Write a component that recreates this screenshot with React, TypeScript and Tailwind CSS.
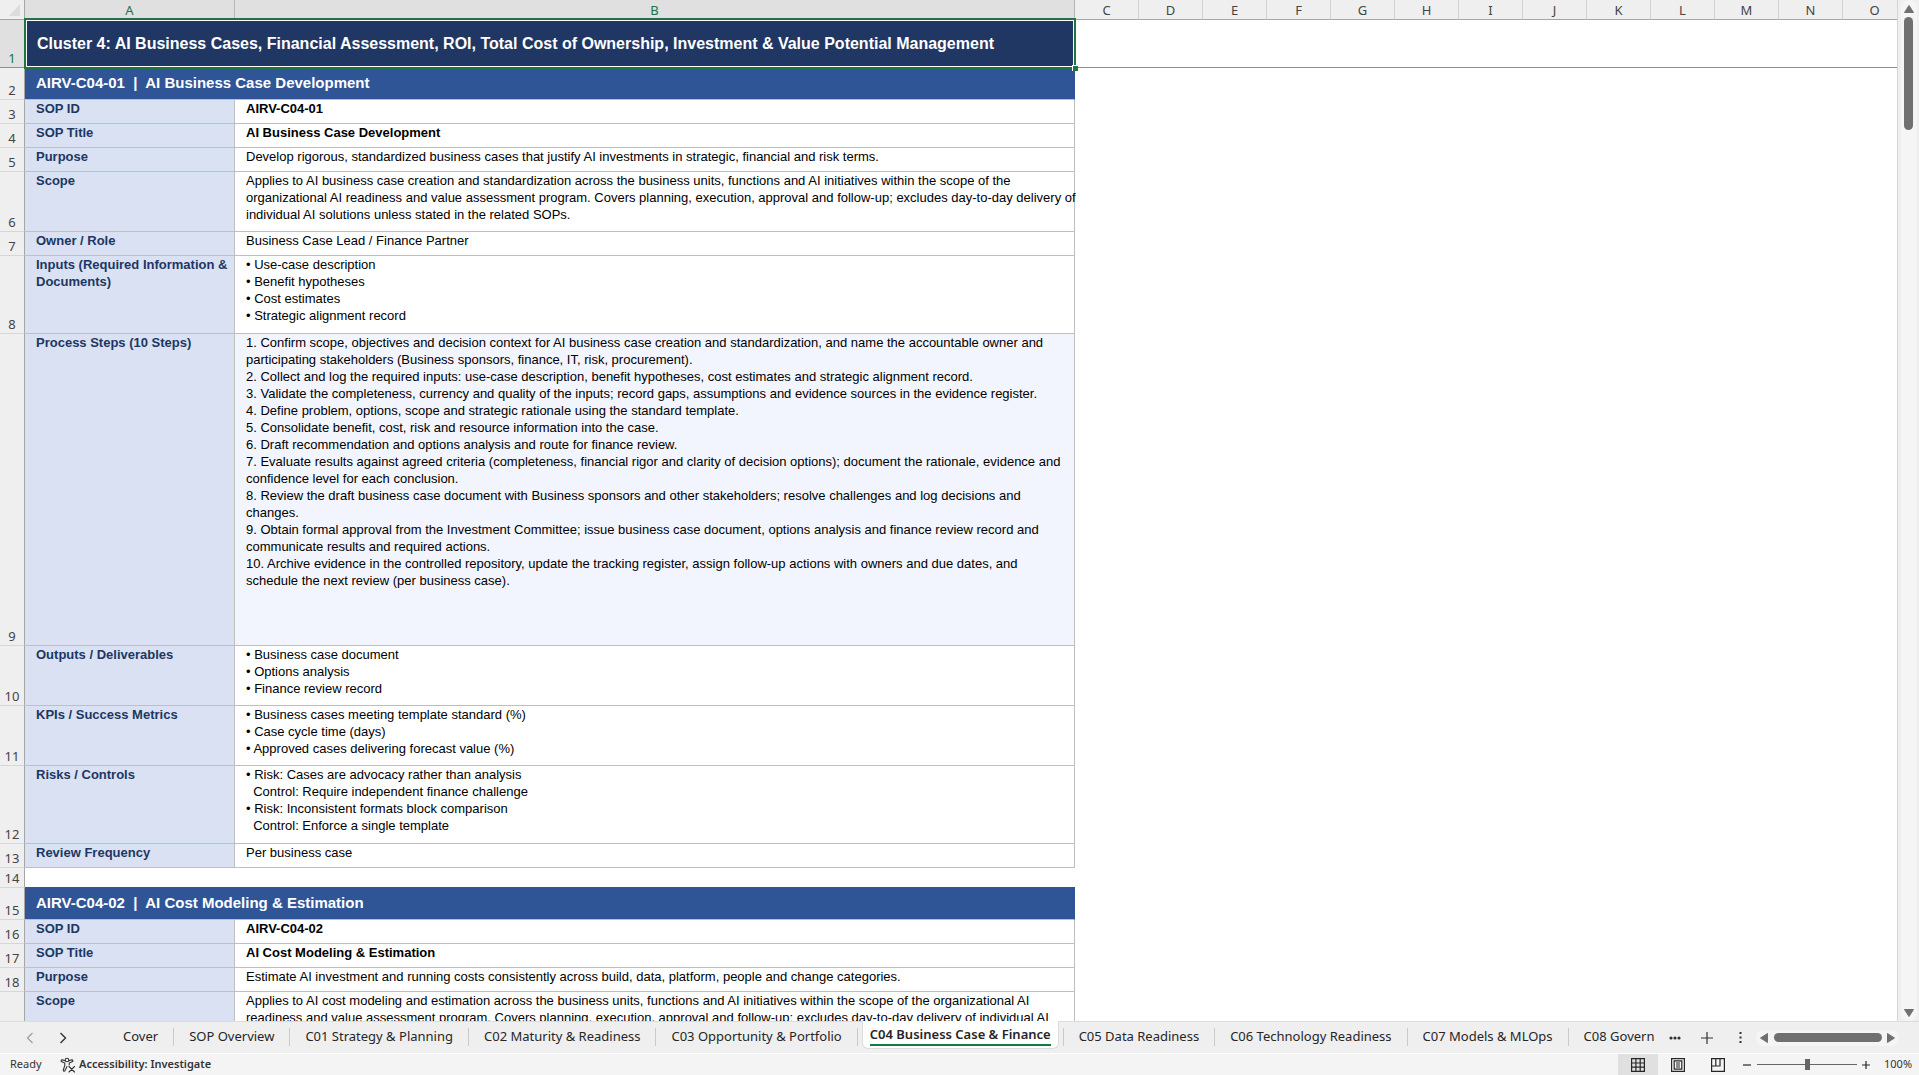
import { useState } from "react";

type Row = {
  n?: number;
  kind: "title" | "section" | "field" | "blank";
  height: string;
  label?: string;
  lines?: string[];
  bold?: boolean;
  tinted?: boolean;
};

const rows: Row[] = [
  {
    n: 1,
    kind: "title",
    height: "h-12",
    label:
      "Cluster 4: AI Business Cases, Financial Assessment, ROI, Total Cost of Ownership, Investment & Value Potential Management",
  },
  { n: 2, kind: "section", height: "h-8", label: "AIRV-C04-01  |  AI Business Case Development" },
  { n: 3, kind: "field", height: "h-6", label: "SOP ID", lines: ["AIRV-C04-01"], bold: true },
  { n: 4, kind: "field", height: "h-6", label: "SOP Title", lines: ["AI Business Case Development"], bold: true },
  {
    n: 5,
    kind: "field",
    height: "h-6",
    label: "Purpose",
    lines: ["Develop rigorous, standardized business cases that justify AI investments in strategic, financial and risk terms."],
  },
  {
    n: 6,
    kind: "field",
    height: "h-[60px]",
    label: "Scope",
    lines: [
      "Applies to AI business case creation and standardization across the business units, functions and AI initiatives within the scope of the",
      "organizational AI readiness and value assessment program. Covers planning, execution, approval and follow-up; excludes day-to-day delivery of",
      "individual AI solutions unless stated in the related SOPs.",
    ],
  },
  { n: 7, kind: "field", height: "h-6", label: "Owner / Role", lines: ["Business Case Lead / Finance Partner"] },
  {
    n: 8,
    kind: "field",
    height: "h-[78px]",
    label: "Inputs (Required Information &\nDocuments)",
    lines: ["• Use-case description", "• Benefit hypotheses", "• Cost estimates", "• Strategic alignment record"],
  },
  {
    n: 9,
    kind: "field",
    height: "h-[312px]",
    label: "Process Steps (10 Steps)",
    tinted: true,
    lines: [
      "1. Confirm scope, objectives and decision context for AI business case creation and standardization, and name the accountable owner and",
      "participating stakeholders (Business sponsors, finance, IT, risk, procurement).",
      "2. Collect and log the required inputs: use-case description, benefit hypotheses, cost estimates and strategic alignment record.",
      "3. Validate the completeness, currency and quality of the inputs; record gaps, assumptions and evidence sources in the evidence register.",
      "4. Define problem, options, scope and strategic rationale using the standard template.",
      "5. Consolidate benefit, cost, risk and resource information into the case.",
      "6. Draft recommendation and options analysis and route for finance review.",
      "7. Evaluate results against agreed criteria (completeness, financial rigor and clarity of decision options); document the rationale, evidence and",
      "confidence level for each conclusion.",
      "8. Review the draft business case document with Business sponsors and other stakeholders; resolve challenges and log decisions and",
      "changes.",
      "9. Obtain formal approval from the Investment Committee; issue business case document, options analysis and finance review record and",
      "communicate results and required actions.",
      "10. Archive evidence in the controlled repository, update the tracking register, assign follow-up actions with owners and due dates, and",
      "schedule the next review (per business case).",
    ],
  },
  {
    n: 10,
    kind: "field",
    height: "h-[60px]",
    label: "Outputs / Deliverables",
    lines: ["• Business case document", "• Options analysis", "• Finance review record"],
  },
  {
    n: 11,
    kind: "field",
    height: "h-[60px]",
    label: "KPIs / Success Metrics",
    lines: ["• Business cases meeting template standard (%)", "• Case cycle time (days)", "• Approved cases delivering forecast value (%)"],
  },
  {
    n: 12,
    kind: "field",
    height: "h-[78px]",
    label: "Risks / Controls",
    lines: [
      "• Risk: Cases are advocacy rather than analysis",
      "  Control: Require independent finance challenge",
      "• Risk: Inconsistent formats block comparison",
      "  Control: Enforce a single template",
    ],
  },
  { n: 13, kind: "field", height: "h-6", label: "Review Frequency", lines: ["Per business case"] },
  { n: 14, kind: "blank", height: "h-5" },
  { n: 15, kind: "section", height: "h-8", label: "AIRV-C04-02  |  AI Cost Modeling & Estimation" },
  { n: 16, kind: "field", height: "h-6", label: "SOP ID", lines: ["AIRV-C04-02"], bold: true },
  { n: 17, kind: "field", height: "h-6", label: "SOP Title", lines: ["AI Cost Modeling & Estimation"], bold: true },
  {
    n: 18,
    kind: "field",
    height: "h-6",
    label: "Purpose",
    lines: ["Estimate AI investment and running costs consistently across build, data, platform, people and change categories."],
  },
  {
    kind: "field",
    height: "h-[60px]",
    label: "Scope",
    lines: [
      "Applies to AI cost modeling and estimation across the business units, functions and AI initiatives within the scope of the organizational AI",
      "readiness and value assessment program. Covers planning, execution, approval and follow-up; excludes day-to-day delivery of individual AI",
    ],
  },
];

const emptyColumns = ["C", "D", "E", "F", "G", "H", "I", "J", "K", "L", "M", "N", "O"];

const tabs = [
  "Cover",
  "SOP Overview",
  "C01 Strategy & Planning",
  "C02 Maturity & Readiness",
  "C03 Opportunity & Portfolio",
  "C04 Business Case & Finance",
  "C05 Data Readiness",
  "C06 Technology Readiness",
  "C07 Models & MLOps",
  "C08 Govern",
];

function RowCells({ row }: { row: Row }) {
  if (row.kind === "title") {
    return (
      <>
        <td
          colSpan={2}
          className="relative border-b border-[#8f8f8f] bg-[#203764] pl-3 text-base font-bold whitespace-pre text-white"
        >
          {row.label}
          <div className="pointer-events-none absolute -inset-x-px -top-0.5 -bottom-0.5 z-10 border-2 border-[#217346]">
            <div className="h-full border border-white" />
            <div className="absolute -right-1 -bottom-1 size-1.5 border-t border-l border-white bg-[#217346]" />
          </div>
        </td>
        <td colSpan={13} className="border-b border-[#8f8f8f]" />
      </>
    );
  }
  if (row.kind === "section") {
    return (
      <td
        colSpan={2}
        className="border-r border-b border-r-[#2f5597] border-b-[#bfbfbf] bg-[#2f5597] pl-[11px] text-[15px] font-bold whitespace-pre text-white"
      >
        {row.label}
      </td>
    );
  }
  if (row.kind === "blank") {
    return <td colSpan={2} className="border-b border-[#2f5597]" />;
  }
  return (
    <>
      <td className="border-r border-b border-[#bfbfbf] bg-[#d9e1f2] pl-[11px] align-top text-[13px] leading-[17px] font-bold whitespace-pre text-[#203764]">
        {row.label}
      </td>
      <td
        className={`border-r border-b border-[#bfbfbf] pl-[11px] align-top text-[13px] leading-[17px] whitespace-pre text-black ${
          row.bold ? "font-bold" : ""
        } ${row.tinted ? "bg-[#f2f5fd]" : "bg-white"}`}
      >
        {row.lines?.join("\n")}
      </td>
    </>
  );
}

function Sheet() {
  return (
    <div className="min-h-0 min-w-0 flex-1 overflow-hidden border-r border-[#d4d4d4] bg-white">
      <table className="w-[1907px] table-fixed border-separate border-spacing-0 font-['Liberation_Sans',Arial,sans-serif]">
        <colgroup>
          <col className="w-[25px]" />
          <col className="w-[210px]" />
          <col className="w-[840px]" />
          {emptyColumns.map((c) => (
            <col key={c} className="w-16" />
          ))}
        </colgroup>
        <thead className="font-['Noto_Sans','Segoe_UI',sans-serif] text-[13px] text-[#444]">
          <tr className="h-5">
            <th aria-label="Select all" className="border-r border-b border-[#a6a6a6] bg-[#efefef] p-0">
              <svg viewBox="0 0 24 19" className="block h-[19px] w-6" aria-hidden="true">
                <path d="M20 4v12H9z" fill="#dcdcdc" />
              </svg>
            </th>
            {["A", "B"].map((c) => (
              <th
                key={c}
                className="border-r border-b border-r-[#b5b5b5] border-b-[#217346] bg-[#e0e0e0] px-0 pt-0.5 pb-0 leading-[17px] font-normal text-[#217346]"
              >
                {c}
              </th>
            ))}
            {emptyColumns.map((c) => (
              <th
                key={c}
                className="border-r border-b border-r-[#d0d0d0] border-b-[#a6a6a6] bg-[#efefef] px-0 pt-0.5 pb-0 leading-[17px] font-normal"
              >
                {c}
              </th>
            ))}
          </tr>
        </thead>
        <tbody>
          {rows.map((row, i) => (
            <tr key={i} className={row.height}>
              <th
                className={`border-r border-b border-r-[#a6a6a6] p-0 align-bottom font-['Noto_Sans','Segoe_UI',sans-serif] text-[13px] leading-[17px] font-normal ${
                  row.n === 1 ? "border-b-[#8f8f8f] bg-[#e0e0e0] text-[#217346]" : "border-b-[#d6d6d6] bg-[#efefef] text-[#444]"
                }`}
              >
                {row.n}
              </th>
              <RowCells row={row} />
            </tr>
          ))}
        </tbody>
      </table>
    </div>
  );
}

function VerticalScroll() {
  return (
    <div className="flex w-[21px] shrink-0 flex-col items-center bg-[#efefef]">
      <div className="flex w-4 flex-1 flex-col items-center rounded-full bg-[#f5f5f5]">
        <button aria-label="Scroll up" className="flex h-[17px] items-end pb-1">
          <svg viewBox="0 0 10 8" className="h-2 w-2.5" aria-hidden="true">
            <path d="M5 .5 9.5 7.5H.5z" fill="#707070" stroke="#707070" strokeLinejoin="round" />
          </svg>
        </button>
        <div className="h-[113px] w-[9px] rounded-full bg-[#707070]" />
        <button aria-label="Scroll down" className="mt-auto flex h-3 items-start">
          <svg viewBox="0 0 10 8" className="h-2 w-2.5" aria-hidden="true">
            <path d="M5 7.5 9.5 .5H.5z" fill="#707070" stroke="#707070" strokeLinejoin="round" />
          </svg>
        </button>
      </div>
    </div>
  );
}

function TabBar({ active, onSelect }: { active: string; onSelect: (tab: string) => void }) {
  return (
    <div className="flex h-8 shrink-0 items-start border-t border-[#dcdcdc] bg-[#efefef] text-[13px] text-[#262626]">
      <div className="flex h-full w-[108px] shrink-0 items-center pl-[26px]">
        <button aria-label="Previous sheet" className="w-[33px]">
          <svg viewBox="0 0 8 12" className="h-3 w-2" fill="none" stroke="#a0a0a0" strokeWidth="1.3" aria-hidden="true">
            <path d="M6.5 1 1.5 6l5 5" />
          </svg>
        </button>
        <button aria-label="Next sheet" className="w-8">
          <svg viewBox="0 0 8 12" className="h-3 w-2" fill="none" stroke="#333" strokeWidth="1.4" aria-hidden="true">
            <path d="m1.5 1 5 5-5 5" />
          </svg>
        </button>
      </div>
      <div className="flex h-full shrink-0">
        {tabs.map((tab, i) =>
          tab === active ? (
            <div key={tab} className="-mt-px flex h-full items-start px-1">
              <button className="h-7 rounded-b-md border border-t-0 border-[#dcdcdc] bg-white px-[7px] font-semibold whitespace-nowrap">
                <span className="block border-b-2 border-[#107c41] leading-[20px]">{tab}</span>
              </button>
            </div>
          ) : (
            <button key={tab} onClick={() => onSelect(tab)} className="flex h-[30px] items-center whitespace-nowrap">
              {tabs[i - 1] === active && <span className="h-[18px] w-px bg-[#cacaca]" />}
              <span className="px-[15px]">{tab}</span>
              {i < tabs.length - 1 && <span className="h-[18px] w-px bg-[#cacaca]" />}
            </button>
          ),
        )}
      </div>
      <div className="ml-auto flex h-full shrink-0 items-center">
        <button aria-label="More sheets" className="mr-5">
          <svg viewBox="0 0 12 4" className="h-1 w-3" fill="#333" aria-hidden="true">
            <circle cx="2" cy="2" r="1.6" />
            <circle cx="6" cy="2" r="1.6" />
            <circle cx="10" cy="2" r="1.6" />
          </svg>
        </button>
        <button aria-label="New sheet" className="mr-[26px]">
          <svg viewBox="0 0 12 12" className="size-3" stroke="#333" strokeWidth="1.2" aria-hidden="true">
            <path d="M6 0v12M0 6h12" />
          </svg>
        </button>
        <svg viewBox="0 0 3 11" className="mr-3.5 h-[11px] w-[3px]" fill="#333" aria-hidden="true">
          <path d="M.5 0h2v2h-2zM.5 4.5h2v2h-2zM.5 9h2v2h-2z" />
        </svg>
        <div className="mr-[22px] flex h-4 w-[143px] items-center justify-between rounded-full bg-[#f5f5f5] px-1">
          <button aria-label="Scroll left">
            <svg viewBox="0 0 8 10" className="h-2.5 w-2" aria-hidden="true">
              <path d="M.5 5 7.5 .5v9z" fill="#707070" stroke="#707070" strokeLinejoin="round" />
            </svg>
          </button>
          <div className="h-[9px] w-[108px] rounded-full bg-[#707070]" />
          <button aria-label="Scroll right">
            <svg viewBox="0 0 8 10" className="h-2.5 w-2" aria-hidden="true">
              <path d="M7.5 5 .5 .5v9z" fill="#707070" stroke="#707070" strokeLinejoin="round" />
            </svg>
          </button>
        </div>
      </div>
    </div>
  );
}

function StatusBar() {
  return (
    <div className="flex h-[22px] shrink-0 items-center border-t border-white bg-[#f4f4f4] text-[11px] text-[#333]">
      <span className="w-[60px] pl-2.5">Ready</span>
      <button className="flex items-center gap-[3px] font-semibold">
        <svg
          viewBox="0 0 16 16"
          className="size-4"
          fill="none"
          stroke="#333"
          strokeWidth="1.1"
          strokeLinecap="round"
          strokeLinejoin="round"
          aria-hidden="true"
        >
          <circle cx="7" cy="3" r="1.8" />
          <path d="M5.3 3.8 2.4 2.9c-1.3-.3-1.8 1.4-.6 1.9l3 1.2v2.4L3.3 13c-.3 1.2 1.2 1.7 1.7.6l2-4" />
          <path d="m8.7 3.8 2.9-.9c1.3-.3 1.8 1.4.6 1.9l-3 1.2v2M9 9.5l5.5 5.5M14.5 9.5 9 15" />
        </svg>
        Accessibility: Investigate
      </button>
      <div className="ml-auto flex h-full items-center">
        <button aria-label="Normal view" className="flex h-full w-10 items-center justify-center bg-[#e0e0e0]">
          <svg viewBox="0 0 14 14" className="size-3.5" fill="none" stroke="#262626" strokeWidth="1.2" aria-hidden="true">
            <path d="M.6 .6h12.8v12.8H.6zM.6 5h12.8M.6 9.2h12.8M4.9 .6v12.8M9.2 .6v12.8" />
          </svg>
        </button>
        <button aria-label="Page layout view" className="flex h-full w-10 items-center justify-center">
          <svg viewBox="0 0 14 14" className="size-3.5" fill="none" stroke="#262626" strokeWidth="1.2" aria-hidden="true">
            <path d="M.6 .6h12.8v12.8H.6zM3.2 2.8h7.6v8.4H3.2zM5 5h4M5 7h4M5 9h4" />
          </svg>
        </button>
        <button aria-label="Page break preview" className="flex h-full w-10 items-center justify-center">
          <svg viewBox="0 0 14 14" className="size-3.5" fill="none" stroke="#262626" strokeWidth="1.2" aria-hidden="true">
            <path d="M.6 .6h12.8v12.8H.6zM.6 8h8.4V.6M4.8 .6V8" />
          </svg>
        </button>
        <button aria-label="Zoom out" className="ml-[5px] w-[14px]">
          <svg viewBox="0 0 8 8" className="size-2" stroke="#262626" strokeWidth="1.2" aria-hidden="true">
            <path d="M0 4h8" />
          </svg>
        </button>
        <input
          type="range"
          aria-label="Zoom"
          min={10}
          max={190}
          defaultValue={100}
          className="h-3 w-[100px] appearance-none bg-[linear-gradient(#666,#666)] bg-[length:100%_1px] bg-center bg-no-repeat [&::-webkit-slider-thumb]:h-[11px] [&::-webkit-slider-thumb]:w-[5px] [&::-webkit-slider-thumb]:appearance-none [&::-webkit-slider-thumb]:bg-[#666]"
        />
        <button aria-label="Zoom in" className="ml-[5px] w-[22px]">
          <svg viewBox="0 0 8 8" className="size-2" stroke="#262626" strokeWidth="1.2" aria-hidden="true">
            <path d="M0 4h8M4 0v8" />
          </svg>
        </button>
        <span className="w-[35px]">100%</span>
      </div>
    </div>
  );
}

export default function App() {
  const [active, setActive] = useState("C04 Business Case & Finance");

  return (
    <main className="flex h-screen flex-col overflow-hidden bg-[#efefef] font-['Noto_Sans','Segoe_UI',sans-serif]">
      <div className="flex min-h-0 flex-1">
        <Sheet />
        <VerticalScroll />
      </div>
      <TabBar active={active} onSelect={setActive} />
      <StatusBar />
    </main>
  );
}
